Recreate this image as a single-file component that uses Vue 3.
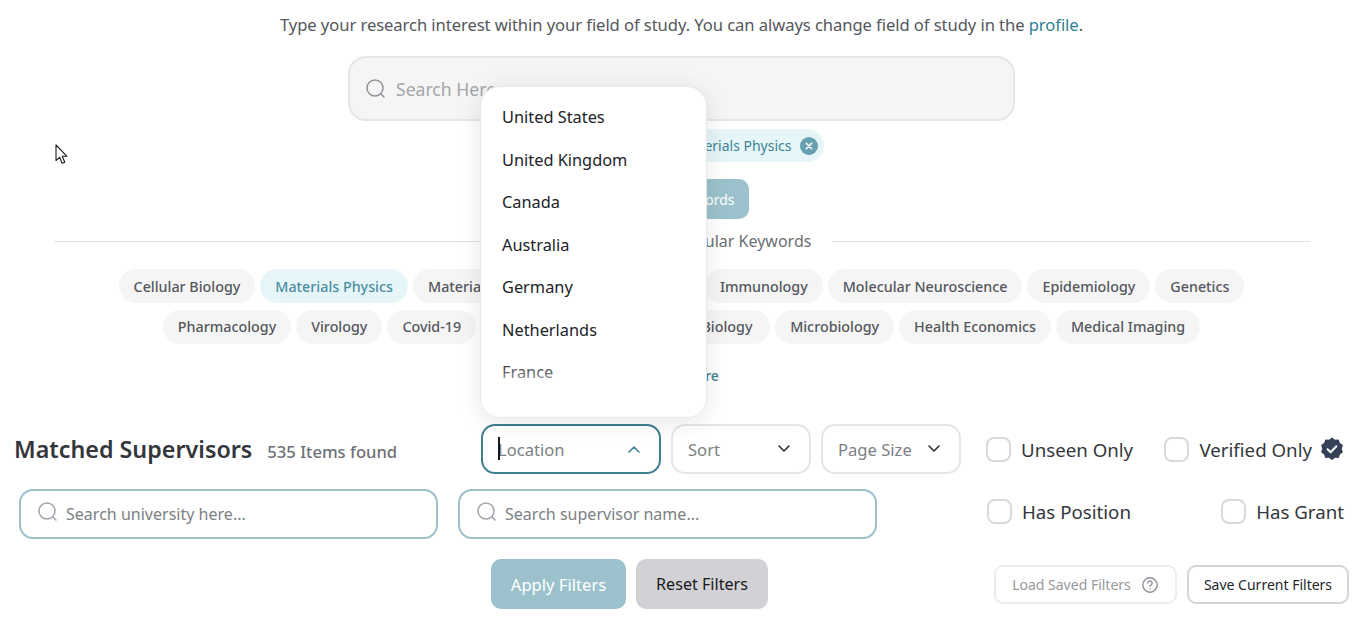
<script setup>
const row1 = [
  { t: 'Cellular Biology' },
  { t: 'Materials Physics', on: true },
  { t: 'Materials Science', w: 149 },
  { t: 'Nanomaterials', w: 133 },
  { t: 'Immunology' },
  { t: 'Molecular Neuroscience' },
  { t: 'Epidemiology' },
  { t: 'Genetics' }
]
const row2 = [
  { t: 'Pharmacology' },
  { t: 'Virology' },
  { t: 'Covid-19' },
  { t: 'Neuroscience', w: 126 },
  { t: 'Molecular Biology', w: 158 },
  { t: 'Microbiology' },
  { t: 'Health Economics' },
  { t: 'Medical Imaging' }
]
const countries = ['United States', 'United Kingdom', 'Canada', 'Australia', 'Germany', 'Netherlands', 'France', 'Spain']
</script>

<template>
  <div class="page">
    <p class="intro">Type your research interest within your field of study. You can always change field of study in the <span class="link">profile</span>.</p>

    <div class="hero-search">
      <svg class="ico-search" width="22" height="22" viewBox="0 0 22 22" fill="none" stroke="#8f949b" stroke-width="1.5" stroke-linecap="round"><circle cx="10" cy="10" r="8"/><path d="M16 16l3 3"/></svg>
      <span>Search Here...</span>
    </div>

    <div class="selected-row">
      <span class="selected">Materials Physics
        <svg width="18" height="18" viewBox="0 0 18 18"><circle cx="9" cy="9" r="9" fill="#659fb0"/><path d="M6.3 6.3l5.4 5.4M11.7 6.3l-5.4 5.4" stroke="#fff" stroke-width="1.6" stroke-linecap="round"/></svg>
      </span>
    </div>

    <div class="search-btn-row"><button class="search-btn">Search Keywords</button></div>

    <div class="divider"><span>Or choose from Popular Keywords</span></div>

    <div class="tags">
      <span v-for="k in row1" :key="k.t" class="tag" :class="{ on: k.on }" :style="k.w ? { width: k.w + 'px' } : null">{{ k.t }}</span>
    </div>
    <div class="tags second">
      <span v-for="k in row2" :key="k.t" class="tag" :style="k.w ? { width: k.w + 'px' } : null">{{ k.t }}</span>
    </div>

    <div class="more">Show More</div>

    <div class="filters">
      <div class="filters-main">
        <div class="line-top">
          <div class="heading">
            <h2>Matched Supervisors</h2>
            <span class="found">535 Items found</span>
          </div>
          <div class="select focus">
            <span class="caret"></span><span class="ph">Location</span>
            <svg width="14" height="8" viewBox="0 0 14 8" fill="none" stroke="#3f8296" stroke-width="1.6" stroke-linecap="round" stroke-linejoin="round"><path d="M2 7l5-5 5 5"/></svg>
          </div>
          <div class="select">
            <span class="ph">Sort</span>
            <svg width="14" height="8" viewBox="0 0 14 8" fill="none" stroke="#2b2f36" stroke-width="1.6" stroke-linecap="round" stroke-linejoin="round"><path d="M2 1l5 5 5-5"/></svg>
          </div>
          <div class="select">
            <span class="ph">Page Size</span>
            <svg width="14" height="8" viewBox="0 0 14 8" fill="none" stroke="#2b2f36" stroke-width="1.6" stroke-linecap="round" stroke-linejoin="round"><path d="M2 1l5 5 5-5"/></svg>
          </div>
        </div>

        <div class="line-search">
          <div class="field">
            <svg width="22" height="22" viewBox="0 0 22 22" fill="none" stroke="#a0a3a9" stroke-width="1.5" stroke-linecap="round"><circle cx="10" cy="10" r="8"/><path d="M16 16l3 3"/></svg>
            <span>Search university here...</span>
          </div>
          <div class="field">
            <svg width="22" height="22" viewBox="0 0 22 22" fill="none" stroke="#a0a3a9" stroke-width="1.5" stroke-linecap="round"><circle cx="10" cy="10" r="8"/><path d="M16 16l3 3"/></svg>
            <span>Search supervisor name...</span>
          </div>
        </div>

        <div class="line-actions">
          <button class="apply">Apply Filters</button>
          <button class="reset">Reset Filters</button>
        </div>
      </div>

      <div class="filters-side">
        <div class="checks top">
          <label class="check"><i></i>Unseen Only</label>
          <label class="check"><i></i>Verified Only
            <svg class="badge" width="24" height="24" viewBox="0 0 24 24"><path fill="#344157" d="M12 0.5l3 2.2 3.7-.3 1.2 3.5 3 2.2-1.1 3.6 1.1 3.6-3 2.2-1.2 3.5-3.7-.3-3 2.2-3-2.2-3.7.3-1.2-3.5-3-2.2 1.1-3.6-1.1-3.6 3-2.2 1.2-3.5 3.7.3z"/><path d="M7.6 12.3l3 3 5.8-6" fill="none" stroke="#fff" stroke-width="2" stroke-linecap="round" stroke-linejoin="round"/></svg>
          </label>
        </div>
        <div class="checks mid">
          <label class="check"><i></i>Has Position</label>
          <label class="check"><i></i>Has Grant</label>
        </div>
        <div class="saved">
          <button class="load">Load Saved Filters
            <svg width="18" height="18" viewBox="0 0 18 18" fill="none" stroke="#8d9096" stroke-width="1.4" stroke-linecap="round"><circle cx="9" cy="9" r="7.2"/><path d="M6.9 7a2.1 2.1 0 1 1 3.2 1.8c-.7.4-1.1.8-1.1 1.6"/><path d="M9 12.8v.1"/></svg>
          </button>
          <button class="save">Save Current Filters</button>
        </div>
      </div>
    </div>

    <div class="dropdown">
      <div v-for="c in countries" :key="c" class="opt">{{ c }}</div>
      <div class="fade"></div>
    </div>

    <svg class="pointer" width="14" height="21" viewBox="0 0 14 21"><path d="M1 1v15.5l3.6-3.2 2.5 6 2.7-1.1-2.6-5.9h4.8z" fill="#fff" stroke="#1c1c1c" stroke-width="1.1" stroke-linejoin="round"/></svg>
  </div>
</template>

<style scoped>
.page {
  position: relative;
  width: 1368px;
  height: 634px;
  box-sizing: border-box;
  padding-right: 5px;
  overflow: hidden;
  background: #fff;
  font-family: "Noto Sans", "Open Sans", sans-serif;
  color: #2b2f36;
}
.intro {
  margin: 0;
  padding-top: 13px;
  height: 56px;
  box-sizing: border-box;
  text-align: center;
  font-size: 16.6px;
  letter-spacing: -0.07px;
  line-height: 24px;
  color: #54575c;
}
.link { color: #2f7f93; }
.hero-search {
  width: 667px;
  height: 65px;
  margin: 0 auto;
  box-sizing: border-box;
  border: 2px solid #e6e6e6;
  border-radius: 18px;
  background: #f5f5f5;
  display: flex;
  align-items: center;
  gap: 9px;
  padding-left: 15px;
  color: #a3a5a9;
  font-size: 17.6px;
}
.selected-row { display: flex; justify-content: center; margin-top: 8px; }
.selected {
  height: 33px;
  width: 284px;
  box-sizing: border-box;
  border-radius: 17px;
  background: #e6f6f8;
  color: #3d8296;
  font-size: 14px;
  display: flex;
  align-items: center;
  justify-content: flex-end;
  gap: 8px;
  padding-right: 6px;
}
.search-btn-row { display: flex; justify-content: center; margin-top: 17px; }
.search-btn {
  width: 134px;
  height: 40px;
  border: 0;
  border-radius: 10px;
  padding: 0 14px 0 0;
  text-align: right;
  background: #9bc2cc;
  color: #fff;
  font: inherit;
  font-size: 14px;
}
.divider {
  margin: 12px 53px 0 54px;
  height: 20px;
  display: flex;
  align-items: center;
  gap: 22px;
  font-size: 16px;
  color: #6c6f74;
}
.divider span { width: 256px; text-align: right; white-space: nowrap; }
.divider::before, .divider::after { content: ""; flex: 1; height: 1px; background: #e4e4e4; }
.tags { display: flex; justify-content: center; gap: 5px; margin-top: 18px; }
.tags.second { margin-top: 7px; }
.tag {
  height: 34px;
  padding: 0 15px;
  box-sizing: border-box;
  border-radius: 17px;
  background: #f5f5f5;
  color: #54575c;
  font-size: 14.3px;
  font-weight: 500;
  line-height: 35px;
  text-align: center;
  white-space: nowrap;
}
.tags.second .tag { line-height: 34px; }
.tag.on { background: #e6f6f8; color: #4b8ea1; }
.more { text-align: center; margin-top: 21px; height: 22px; line-height: 22px; font-size: 14px; font-weight: 500; color: #3d8296; }
.filters { display: flex; margin-top: 37px; }
.filters-main { width: 986px; flex: none; }
.filters-side { flex: 1; }
.line-top { display: flex; gap: 10px; height: 50px; align-items: center; }
.heading {
  width: 471px;
  box-sizing: border-box;
  padding-left: 14px;
  display: flex;
  align-items: baseline;
  gap: 15px;
}
.heading h2 { margin: 0; font-size: 23.3px; font-weight: 600; color: #33363b; }
.found { font-size: 16.6px; font-weight: 500; color: #6d7075; }
.select {
  width: 140px;
  height: 50px;
  box-sizing: border-box;
  border: 2px solid #e6e6e6;
  border-radius: 14px;
  padding: 0 18px 0 15px;
  display: flex;
  align-items: center;
  justify-content: space-between;
  color: #7c7f84;
  font-size: 16.6px;
}
.select.focus { width: 180px; border-color: #3f7f90; position: relative; }
.caret { position: absolute; left: 15px; top: 11px; width: 2px; height: 23px; background: #15171a; }
.line-search { display: flex; gap: 20px; margin-top: 15px; padding-left: 19px; }
.field {
  width: 419px;
  height: 50px;
  box-sizing: border-box;
  border: 2px solid #9cc1cb;
  border-radius: 14px;
  padding: 0 16px;
  display: flex;
  align-items: center;
  gap: 7px;
  color: #7c7f84;
  font-size: 16.05px;
}
.field svg { margin-top: -4px; }
.line-actions { display: flex; gap: 10px; margin-top: 20px; padding-left: 491px; }
.line-actions button {
  height: 50px;
  border: 0;
  border-radius: 10px;
  font: inherit;
  font-size: 16.6px;
}
.apply { width: 135px; background: #9bc2cc; color: #fff; }
.line-actions .reset { width: 132px; background: #d2d2d6; color: #17191c; font-size: 16.1px; }
.checks { display: flex; justify-content: space-between; align-items: center; padding-right: 19px; }
.checks.top { height: 50px; }
.checks.mid { height: 50px; margin-top: 12px; padding-left: 1px; }
.check { display: flex; align-items: center; gap: 10px; font-size: 18.7px; color: #34373c; white-space: nowrap; }
.check i { width: 25px; height: 25px; box-sizing: border-box; border: 2px solid #d9d9d9; border-radius: 8px; }
.badge { margin-left: -2px; }
.saved { display: flex; gap: 10px; margin-top: 29px; padding-left: 8px; }
.saved button {
  height: 39px;
  box-sizing: border-box;
  border-radius: 9px;
  background: #fff;
  font: inherit;
  font-size: 14px;
  display: flex;
  align-items: center;
  justify-content: center;
  gap: 10px;
}
.load { width: 183px; border: 2px solid #ececec; color: #96989c; }
.save { width: 162px; border: 2px solid #d5d5d7; color: #24272b; }
.dropdown {
  position: absolute;
  left: 480px;
  top: 86px;
  width: 227px;
  height: 332px;
  box-sizing: border-box;
  padding: 9px 21px 0;
  overflow: hidden;
  background: #fff;
  border: 1px solid #e8e8e8;
  border-radius: 20px;
  box-shadow: 0 4px 24px rgba(0, 0, 0, 0.1);
}
.opt { height: 42.5px; line-height: 42.5px; font-size: 16.35px; color: #212328; white-space: nowrap; }
.fade {
  position: absolute;
  left: 0;
  right: 0;
  bottom: 0;
  height: 55px;
  background: linear-gradient(to bottom, rgba(255,255,255,0), #fff 60%);
}
.pointer { position: absolute; left: 55px; top: 144px; }
</style>

<style>
html, body { margin: 0; overflow: hidden; background: #fff; }
</style>
